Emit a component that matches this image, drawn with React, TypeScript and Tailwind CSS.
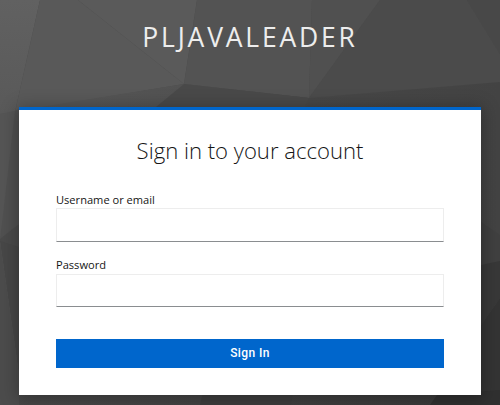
function Backdrop() {
  return (
    <svg className="absolute inset-0 -z-10 h-full w-full" viewBox="0 0 500 405" preserveAspectRatio="none" aria-hidden="true">
      <defs>
        <linearGradient id="left" x1="0" y1="0" x2="0" y2="1">
          <stop offset="0" stopColor="#616161" />
          <stop offset="1" stopColor="#595959" />
        </linearGradient>
        <linearGradient id="lower" gradientUnits="userSpaceOnUse" x1="0" y1="0" x2="500" y2="0">
          <stop offset="0" stopColor="#585858" />
          <stop offset="0.37" stopColor="#525252" />
          <stop offset="0.62" stopColor="#474747" />
          <stop offset="1" stopColor="#434343" />
        </linearGradient>
        <linearGradient id="floor" gradientUnits="userSpaceOnUse" x1="0" y1="0" x2="500" y2="0">
          <stop offset="0" stopColor="#484848" />
          <stop offset="0.4" stopColor="#434343" />
          <stop offset="1" stopColor="#383838" />
        </linearGradient>
      </defs>
      <rect width="500" height="405" fill="#4a4a4a" />
      <polygon points="0,0 40,0 15,112 0,114" fill="url(#left)" />
      <polygon points="40,0 78,0 184,84 15,112" fill="#595959" />
      <polygon points="78,0 197,0 184,84" fill="#5a5a5a" />
      <polygon points="197,0 312,0 309,98 184,84" fill="#535353" />
      <polygon points="312,0 380,0 309,98" fill="#505050" />
      <polygon points="380,0 467,0 500,54 500,82 309,98" fill="#4b4b4b" />
      <polygon points="467,0 500,0 500,54" fill="#484848" />
      <polygon points="0,114 15,111 184,84 309,98 500,82 500,405 0,405" fill="url(#lower)" />
      <polygon points="184,84 309,98 305,107 156,107" fill="#494949" />
      <polygon points="0,114 15,111 0,241" fill="#555" />
      <polygon points="15,111 19,109 19,224 0,240" fill="#505050" />
      <polygon points="0,239 19,224 19,249 0,242" fill="#4a4a4a" />
      <polygon points="0,241 19,247 19,375" fill="#474747" />
      <polygon points="0,241 19,375 19,405 0,405" fill="#4c4c4c" />
      <polygon points="481,222 500,235 500,262 481,265" fill="#404040" />
      <polygon points="481,265 500,261 500,298 481,325" fill="#383838" />
      <polygon points="481,325 500,298 500,405 481,405" fill="#343434" />
      <polygon points="19,393 481,393 481,405 19,405" fill="url(#floor)" />
      <polygon points="203,393 293,393 291,405 200,405" fill="#3e3e3e" />
      <polygon points="437,395 500,390 500,405 430,405" fill="#303030" />
    </svg>
  );
}

function Field({ label, id, type, inputClass }: { label: string; id: string; type: string; inputClass: string }) {
  return (
    <div className="flex flex-col">
      <label htmlFor={id} className="h-[16px] text-[11.1px] leading-[16px] text-[#151515]">
        {label}
      </label>
      <input
        id={id}
        type={type}
        className={`w-full rounded-none border border-[#ededed] border-b-[#8a8d90] bg-white px-2 outline-none ${inputClass}`}
      />
    </div>
  );
}

export default function App() {
  return (
    <div className="relative isolate flex h-[405px] w-full flex-col overflow-hidden px-[19px] font-['Open_Sans',sans-serif]">
      <Backdrop />
      <header className="flex h-[107px] shrink-0 justify-center pt-[17px]">
        <h1 className="h-[40px] text-[26.5px] leading-[40px] font-normal tracking-[2.8px] text-[#ededed] uppercase">
          pljavaleader
        </h1>
      </header>
      <main className="h-[288px] shrink-0 border-t-[3px] border-[#0066cc] bg-white px-[37px] shadow-[0_2px_16px_2px_rgba(0,0,0,0.28)]">
        <h2 className="pt-[24px] text-center text-[22.1px] leading-[32px] font-light text-[#151515]">
          Sign in to your account
        </h2>
        <form className="mt-[26px] flex flex-col" onSubmit={(e) => e.preventDefault()}>
          <Field label="Username or email" id="username" type="text" inputClass="h-[34px]" />
          <div className="mt-[15px]">
            <Field label="Password" id="password" type="password" inputClass="mt-[1px] h-[33px]" />
          </div>
          <button
            type="submit"
            className="mt-[32px] h-[29px] bg-[#0066cc] font-['Roboto',sans-serif] text-[12px] leading-[29px] font-medium tracking-[0.4px] text-white"
          >
            Sign In
          </button>
        </form>
      </main>
    </div>
  );
}
